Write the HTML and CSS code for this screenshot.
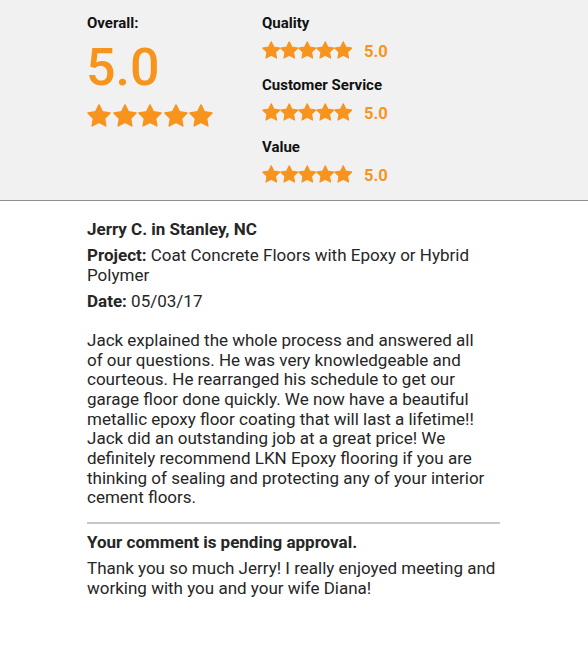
FILE: index.html
```html
<!DOCTYPE html>
<html>
<head>
<meta charset="utf-8">
<link rel="stylesheet" href="styles.css">
</head>
<body>
<svg width="0" height="0" class="defs">
  <defs>
    <symbol id="star" viewBox="0 0 24 23">
      <polygon points="12,0.9 15.5,7.8 23.1,9 17.6,14.4 18.9,22 12,18.4 5.1,22 6.4,14.4 0.9,9 8.5,7.8" stroke-width="1.4" stroke-linejoin="round"/>
    </symbol>
  </defs>
</svg>
<header class="ratings">
  <div class="overall">
    <div class="label">Overall:</div>
    <div class="big-score">5.0</div>
    <div class="stars big">
      <svg><use href="#star"/></svg><svg><use href="#star"/></svg><svg><use href="#star"/></svg><svg><use href="#star"/></svg><svg><use href="#star"/></svg>
    </div>
  </div>
  <div class="categories">
    <div class="group">
      <div class="label">Quality</div>
      <div class="row">
        <div class="stars small"><svg><use href="#star"/></svg><svg><use href="#star"/></svg><svg><use href="#star"/></svg><svg><use href="#star"/></svg><svg><use href="#star"/></svg></div>
        <span class="score">5.0</span>
      </div>
    </div>
    <div class="group">
      <div class="label">Customer Service</div>
      <div class="row">
        <div class="stars small"><svg><use href="#star"/></svg><svg><use href="#star"/></svg><svg><use href="#star"/></svg><svg><use href="#star"/></svg><svg><use href="#star"/></svg></div>
        <span class="score">5.0</span>
      </div>
    </div>
    <div class="group">
      <div class="label">Value</div>
      <div class="row">
        <div class="stars small"><svg><use href="#star"/></svg><svg><use href="#star"/></svg><svg><use href="#star"/></svg><svg><use href="#star"/></svg><svg><use href="#star"/></svg></div>
        <span class="score">5.0</span>
      </div>
    </div>
  </div>
</header>
<main class="review">
  <div class="author">Jerry C. in Stanley, NC</div>
  <div class="meta"><b>Project:</b> Coat Concrete Floors with Epoxy or Hybrid Polymer</div>
  <div class="meta"><b>Date:</b> 05/03/17</div>
  <p class="body">Jack explained the whole process and answered all of our questions. He was very knowledgeable and courteous. He rearranged his schedule to get our garage floor done quickly. We now have a beautiful metallic epoxy floor coating that will last a lifetime!! Jack did an outstanding job at a great price! We definitely recommend LKN Epoxy flooring if you are thinking of sealing and protecting any of your interior cement floors.</p>
  <hr class="divider">
  <div class="pending">Your comment is pending approval.</div>
  <p class="reply">Thank you so much Jerry! I really enjoyed meeting and working with you and your wife Diana!</p>
</main>
</body>
</html>
```

FILE: styles.css
```css
html, body {
  margin: 0;
  padding: 0;
  background: #fff;
}
body {
  font-family: Roboto, "Noto Sans", "Liberation Sans", sans-serif;
  color: #262626;
}
.defs {
  position: absolute;
  width: 0;
  height: 0;
}
.ratings {
  box-sizing: border-box;
  height: 201px;
  background: #f1f1f1;
  border-bottom: 1px solid #8f8f8f;
  display: flex;
  padding: 14px 0 0 87px;
}
.label {
  font-size: 15px;
  font-weight: 700;
  line-height: 18px;
  color: #111;
}
.overall {
  width: 175px;
}
.big-score {
  font-size: 52px;
  font-weight: 500;
  line-height: 50px;
  color: #f7941d;
  margin-top: 11px;
  margin-left: -1px;
}
.stars {
  display: flex;
}
.stars svg {
  fill: #f7941d;
  stroke: #f7941d;
  display: block;
}
.stars.big {
  margin-top: 11px;
  gap: 1.5px;
}
.stars.big svg {
  width: 24px;
  height: 23px;
}
.stars.small svg {
  width: 18.5px;
  height: 18px;
  margin-right: -0.5px;
}
.group {
  margin-bottom: 17px;
}
.row {
  display: flex;
  align-items: center;
  margin-top: 9px;
  height: 18px;
}
.score {
  margin-left: 12px;
  font-size: 16.5px;
  font-weight: 700;
  color: #f7941d;
  position: relative;
  top: 1px;
}
.review {
  width: 413px;
  margin-left: 87px;
  padding-top: 19px;
  font-size: 17px;
  line-height: 19.7px;
}
.author {
  font-weight: 700;
}
.meta {
  margin-top: 6.5px;
}
.meta b {
  font-weight: 700;
}
.body {
  margin: 19px 10px 0 0;
}
.divider {
  margin: 13.5px 0 0;
  border: 0;
  height: 2px;
  background: #c8c8c8;
}
.pending {
  margin-top: 9.5px;
  font-weight: 700;
}
.reply {
  margin: 6px 0 0;
}
```
